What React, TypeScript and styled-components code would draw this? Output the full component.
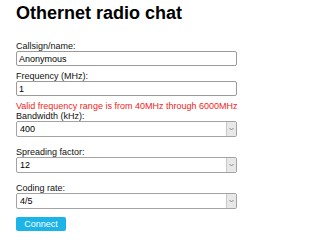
import React from "react";
import styled, { createGlobalStyle } from "styled-components";

const Global = createGlobalStyle`
  html, body { margin: 0; padding: 0; background: #fff; }
  body { font-family: "Liberation Sans", Arial, sans-serif; font-size: 9px; color: #000; }
`;

const Page = styled.div`
  padding: 3px 18px 0 16px;
  width: 221px;
`;

const Title = styled.h1`
  margin: 0 0 17px;
  font-size: 18px;
  font-weight: bold;
  line-height: 21px;
  white-space: nowrap;
`;

const Form = styled.form`
  display: flex;
  flex-direction: column;
`;

const Label = styled.label`
  display: block;
  font-size: 9px;
  line-height: 10px;
  color: #111;
`;

const TextInput = styled.input`
  box-sizing: border-box;
  width: 221px;
  height: 15px;
  margin: 0 0 5px;
  padding: 0 2px;
  border: 1px solid #9a9a9a;
  border-radius: 2px;
  font-family: "Liberation Sans", Arial, sans-serif;
  font-size: 9px;
  color: #000;
  background: #fff;
  outline: none;
`;

const ErrorText = styled.div`
  color: #f01c1c;
  font-size: 9px;
  line-height: 10px;
  white-space: nowrap;
`;

const SelectBox = styled.div<{ $gap: number }>`
  box-sizing: border-box;
  display: flex;
  width: 221px;
  height: 16px;
  margin: 0 0 ${(p) => p.$gap}px;
  border: 1px solid #a3a3a3;
  border-radius: 2px;
  background: #fff;
  overflow: hidden;
`;

const NativeSelect = styled.select`
  flex: 1;
  min-width: 0;
  appearance: none;
  -webkit-appearance: none;
  border: none;
  outline: none;
  background: transparent;
  padding: 0 3px;
  font-family: "Liberation Sans", Arial, sans-serif;
  font-size: 9px;
  color: #000;
`;

const ArrowBox = styled.span`
  width: 9px;
  display: flex;
  align-items: center;
  justify-content: center;
  background: #e8e8e8;
  border-left: 1px solid #c8c8c8;
`;

const Chevron = () => (
  <svg width="5" height="4" viewBox="0 0 5 4">
    <path d="M0.5 1 L2.5 3 L4.5 1" fill="none" stroke="#8a8a8a" strokeWidth="1" />
  </svg>
);

const Button = styled.button`
  box-sizing: border-box;
  width: 50px;
  height: 14px;
  padding: 0;
  border: none;
  border-radius: 2px;
  background: #1cb3e6;
  color: #fff;
  font-family: "Liberation Sans", Arial, sans-serif;
  font-size: 9px;
  line-height: 14px;
  text-align: center;
  cursor: pointer;
`;

type SelectFieldProps = { label: string; value: string; options: string[]; gap?: number };

const SelectField = ({ label, value, options, gap = 10 }: SelectFieldProps) => (
  <>
    <Label>{label}</Label>
    <SelectBox $gap={gap}>
      <NativeSelect defaultValue={value}>
        {options.map((o) => (
          <option key={o} value={o}>
            {o}
          </option>
        ))}
      </NativeSelect>
      <ArrowBox>
        <Chevron />
      </ArrowBox>
    </SelectBox>
  </>
);

export default function App() {
  return (
    <Page>
      <Global />
      <Title>Othernet radio chat</Title>
      <Form onSubmit={(e) => e.preventDefault()}>
        <Label>Callsign/name:</Label>
        <TextInput defaultValue="Anonymous" />
        <Label>Frequency (MHz):</Label>
        <TextInput defaultValue="1" />
        <ErrorText>Valid frequency range is from 40MHz through 6000MHz</ErrorText>
        <SelectField label="Bandwidth (kHz):" value="400" options={["125", "250", "400", "500"]} />
        <SelectField label="Spreading factor:" value="12" options={["7", "8", "9", "10", "11", "12"]} />
        <SelectField label="Coding rate:" value="4/5" options={["4/5", "4/6", "4/7", "4/8"]} gap={8} />
        <div>
          <Button type="submit">Connect</Button>
        </div>
      </Form>
    </Page>
  );
}
